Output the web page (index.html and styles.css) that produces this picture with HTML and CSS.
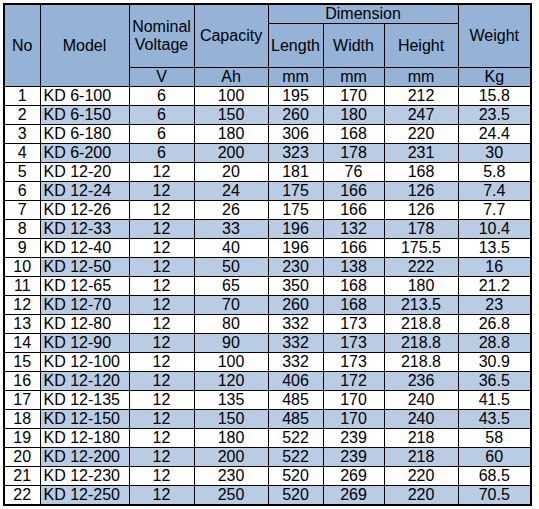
FILE: index.html
```html
<!DOCTYPE html>
<html>
<head>
<meta charset="utf-8">
<link rel="stylesheet" href="styles.css">
</head>
<body>
<table class="spec">
<colgroup>
<col class="c-no"><col class="c-model"><col class="c-volt"><col class="c-cap"><col class="c-len"><col class="c-wid"><col class="c-hei"><col class="c-wt">
</colgroup>
<thead>
<tr class="h1">
<th rowspan="3">No</th>
<th rowspan="3">Model</th>
<th rowspan="2">Nominal<br>Voltage</th>
<th rowspan="2">Capacity</th>
<th colspan="3">Dimension</th>
<th rowspan="2">Weight</th>
</tr>
<tr class="h2">
<th>Length</th><th>Width</th><th>Height</th>
</tr>
<tr class="h3">
<th>V</th><th>Ah</th><th>mm</th><th>mm</th><th>mm</th><th>Kg</th>
</tr>
</thead>
<tbody>
<tr><td>1</td><td class="model">KD 6-100</td><td>6</td><td>100</td><td>195</td><td>170</td><td>212</td><td>15.8</td></tr>
<tr class="alt"><td>2</td><td class="model">KD 6-150</td><td>6</td><td>150</td><td>260</td><td>180</td><td>247</td><td>23.5</td></tr>
<tr><td>3</td><td class="model">KD 6-180</td><td>6</td><td>180</td><td>306</td><td>168</td><td>220</td><td>24.4</td></tr>
<tr class="alt"><td>4</td><td class="model">KD 6-200</td><td>6</td><td>200</td><td>323</td><td>178</td><td>231</td><td>30</td></tr>
<tr><td>5</td><td class="model">KD 12-20</td><td>12</td><td>20</td><td>181</td><td>76</td><td>168</td><td>5.8</td></tr>
<tr class="alt"><td>6</td><td class="model">KD 12-24</td><td>12</td><td>24</td><td>175</td><td>166</td><td>126</td><td>7.4</td></tr>
<tr><td>7</td><td class="model">KD 12-26</td><td>12</td><td>26</td><td>175</td><td>166</td><td>126</td><td>7.7</td></tr>
<tr class="alt"><td>8</td><td class="model">KD 12-33</td><td>12</td><td>33</td><td>196</td><td>132</td><td>178</td><td>10.4</td></tr>
<tr><td>9</td><td class="model">KD 12-40</td><td>12</td><td>40</td><td>196</td><td>166</td><td>175.5</td><td>13.5</td></tr>
<tr class="alt"><td>10</td><td class="model">KD 12-50</td><td>12</td><td>50</td><td>230</td><td>138</td><td>222</td><td>16</td></tr>
<tr><td>11</td><td class="model">KD 12-65</td><td>12</td><td>65</td><td>350</td><td>168</td><td>180</td><td>21.2</td></tr>
<tr class="alt"><td>12</td><td class="model">KD 12-70</td><td>12</td><td>70</td><td>260</td><td>168</td><td>213.5</td><td>23</td></tr>
<tr><td>13</td><td class="model">KD 12-80</td><td>12</td><td>80</td><td>332</td><td>173</td><td>218.8</td><td>26.8</td></tr>
<tr class="alt"><td>14</td><td class="model">KD 12-90</td><td>12</td><td>90</td><td>332</td><td>173</td><td>218.8</td><td>28.8</td></tr>
<tr><td>15</td><td class="model">KD 12-100</td><td>12</td><td>100</td><td>332</td><td>173</td><td>218.8</td><td>30.9</td></tr>
<tr class="alt"><td>16</td><td class="model">KD 12-120</td><td>12</td><td>120</td><td>406</td><td>172</td><td>236</td><td>36.5</td></tr>
<tr><td>17</td><td class="model">KD 12-135</td><td>12</td><td>135</td><td>485</td><td>170</td><td>240</td><td>41.5</td></tr>
<tr class="alt"><td>18</td><td class="model">KD 12-150</td><td>12</td><td>150</td><td>485</td><td>170</td><td>240</td><td>43.5</td></tr>
<tr><td>19</td><td class="model">KD 12-180</td><td>12</td><td>180</td><td>522</td><td>239</td><td>218</td><td>58</td></tr>
<tr class="alt"><td>20</td><td class="model">KD 12-200</td><td>12</td><td>200</td><td>522</td><td>239</td><td>218</td><td>60</td></tr>
<tr><td>21</td><td class="model">KD 12-230</td><td>12</td><td>230</td><td>520</td><td>269</td><td>220</td><td>68.5</td></tr>
<tr class="alt"><td>22</td><td class="model">KD 12-250</td><td>12</td><td>250</td><td>520</td><td>269</td><td>220</td><td>70.5</td></tr>
</tbody>
</table>
</body>
</html>
```

FILE: styles.css
```css
html, body {
  margin: 0;
  background: #ffffff;
}
body {
  padding: 3px;
  font-family: "Liberation Sans", Arial, sans-serif;
  font-size: 16px;
  color: #000;
}
.spec {
  border-collapse: collapse;
  table-layout: fixed;
  width: 529px;
  border: 2px solid #000;
}
.c-no { width: 36px; }
.c-model { width: 89px; }
.c-volt { width: 65px; }
.c-cap { width: 74px; }
.c-len { width: 55px; }
.c-wid { width: 61px; }
.c-hei { width: 74px; }
.c-wt { width: 73px; }
.spec th, .spec td {
  border: 1px solid #000;
  padding: 0;
  text-align: center;
  vertical-align: middle;
  line-height: 18px;
  white-space: nowrap;
  overflow: hidden;
}
.spec th {
  background: #95b3d7;
  font-weight: normal;
}
.h1 { height: 18px; }
.h2 { height: 44px; }
.h3 { height: 18px; }
.spec tbody tr { height: 19px; }
.spec tbody td { background: #ffffff; }
.spec tbody tr.alt td { background: #b8cce4; }
.spec tbody tr.alt td:first-child { background: #ffffff; }
.spec td.model {
  text-align: left;
  padding-left: 3px;
}
```
